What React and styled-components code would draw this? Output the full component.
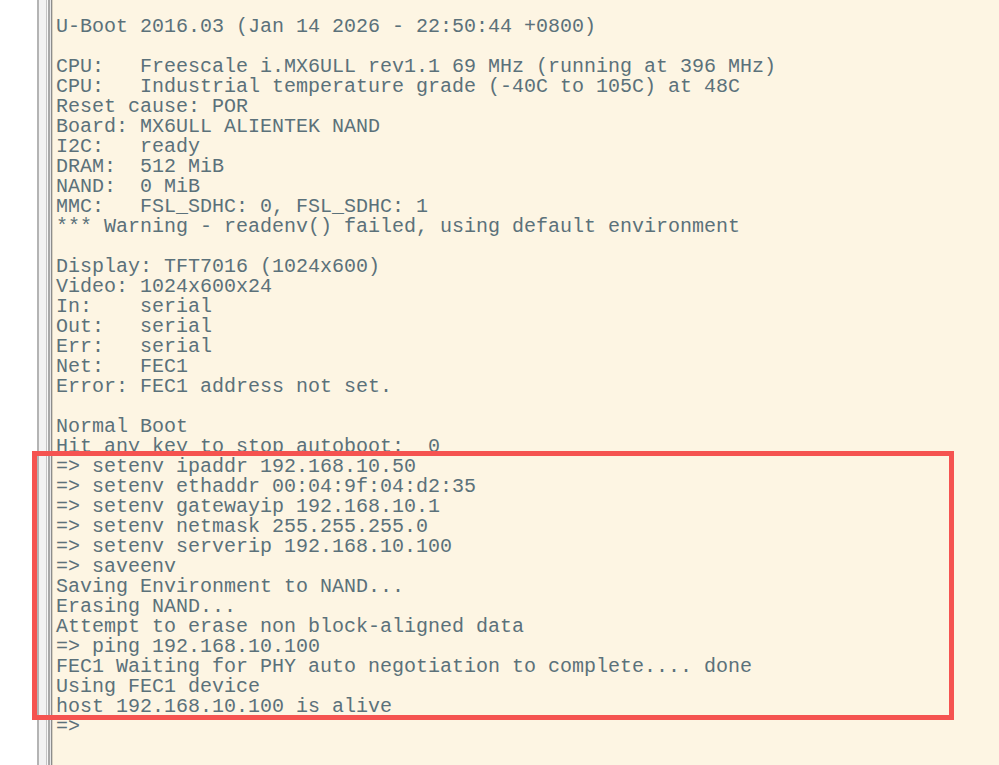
import React from 'react'
import styled, { createGlobalStyle } from 'styled-components';

const lines = [
  'U-Boot 2016.03 (Jan 14 2026 - 22:50:44 +0800)',
  '',
  'CPU:   Freescale i.MX6ULL rev1.1 69 MHz (running at 396 MHz)',
  'CPU:   Industrial temperature grade (-40C to 105C) at 48C',
  'Reset cause: POR',
  'Board: MX6ULL ALIENTEK NAND',
  'I2C:   ready',
  'DRAM:  512 MiB',
  'NAND:  0 MiB',
  'MMC:   FSL_SDHC: 0, FSL_SDHC: 1',
  '*** Warning - readenv() failed, using default environment',
  '',
  'Display: TFT7016 (1024x600)',
  'Video: 1024x600x24',
  'In:    serial',
  'Out:   serial',
  'Err:   serial',
  'Net:   FEC1',
  'Error: FEC1 address not set.',
  '',
  'Normal Boot',
  'Hit any key to stop autoboot:  0',
  '=> setenv ipaddr 192.168.10.50',
  '=> setenv ethaddr 00:04:9f:04:d2:35',
  '=> setenv gatewayip 192.168.10.1',
  '=> setenv netmask 255.255.255.0',
  '=> setenv serverip 192.168.10.100',
  '=> saveenv',
  'Saving Environment to NAND...',
  'Erasing NAND...',
  'Attempt to erase non block-aligned data',
  '=> ping 192.168.10.100',
  'FEC1 Waiting for PHY auto negotiation to complete.... done',
  'Using FEC1 device',
  'host 192.168.10.100 is alive',
  '=>',
]

const App = () => {
  return (
    <>
      <GlobalStyle />
      <Window>
        <Margin />
        <Gutter>
          <Rule $color="#b4b4b4" $width={2} />
          <Rule $color="#f2f2f2" $width={7} />
          <Rule $color="#c4c4c4" $width={1} />
          <Rule $color="#f7f7f7" $width={1} />
          <Rule $color="#a8a8a8" $width={2} />
          <Rule $color="#e8e8e8" $width={1} />
          <Rule $color="#8c8c8c" $width={1} />
          <Rule $color="#d8d2c2" $width={1} />
        </Gutter>
        <Terminal>
          {lines.map((line, i) => (
            <Line key={i}>{line || ' '}</Line>
          ))}
        </Terminal>
        <Highlight />
      </Window>
    </>
  )
}

const GlobalStyle = createGlobalStyle`
  html, body {
    margin: 0;
    padding: 0;
    background: #ffffff;
  }
`

const Window = styled.div`
  position: relative;
  display: flex;
  width: 999px;
  height: 765px;
  overflow: hidden;
  background: #ffffff;
`

const Margin = styled.div`
  width: 37px;
  flex-shrink: 0;
  background: #ffffff;
`

const Gutter = styled.div`
  display: flex;
  flex-shrink: 0;
`

const Rule = styled.div`
  width: ${p => p.$width}px;
  background: ${p => p.$color};
`

const Terminal = styled.div`
  flex: 1;
  background: #fdf5e3;
  padding: 17px 0 0 3px;
  font-family: "Liberation Mono", "DejaVu Sans Mono", monospace;
  font-size: 20px;
  color: #5b717a;
`

const Line = styled.div`
  height: 20px;
  line-height: 20px;
  white-space: pre;
`

const Highlight = styled.div`
  position: absolute;
  left: 32px;
  top: 451px;
  width: 922px;
  height: 269px;
  box-sizing: border-box;
  border: 5px solid #f55350;
`

export default App
